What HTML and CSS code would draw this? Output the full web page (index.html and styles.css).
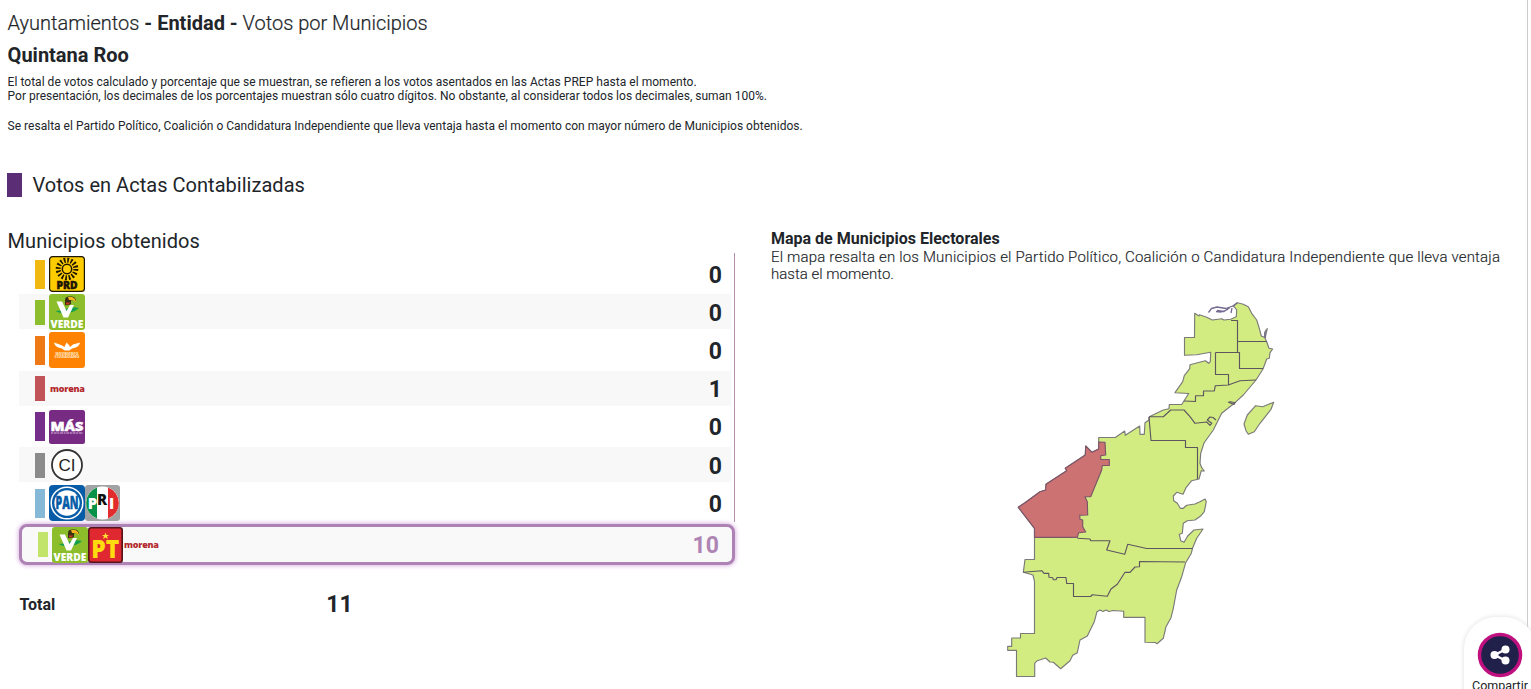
FILE: index.html
```html
<!DOCTYPE html>
<html lang="es">
<head>
<meta charset="utf-8">
<title>Votos por Municipios</title>
<link rel="stylesheet" href="styles.css">
</head>
<body>
<div class="page">
  <main class="content">
    <h1 class="title">Ayuntamientos <b>- Entidad -</b> Votos por Municipios</h1>
    <h2 class="state">Quintana Roo</h2>
    <p class="notes"><span class="first-note">El total de votos calculado y porcentaje que se muestran, se refieren a los votos asentados en las Actas PREP hasta el momento.</span><br>Por presentación, los decimales de los porcentajes muestran sólo cuatro dígitos. No obstante, al considerar todos los decimales, suman 100%.</p>
    <p class="notes lead">Se resalta el Partido Político, Coalición o Candidatura Independiente que lleva ventaja hasta el momento con mayor número de Municipios obtenidos.</p>
    <h3 class="section"><i class="marker"></i><span>Votos en Actas Contabilizadas</span></h3>
    <div class="columns">
      <section class="results">
        <h4 class="subtitle">Municipios obtenidos</h4>
        <div class="rows">
          <div class="row"><i class="bar prd"></i>
            <svg class="logo" viewBox="0 0 36 36"><rect x=".6" y=".6" width="34.800" height="34.800" rx="3" fill="#fc0" stroke="#1c1500" stroke-width="1.200"/><circle cx="18" cy="13" r="4.700" fill="none" stroke="#1c1500" stroke-width="1.500"/><circle cx="18" cy="13" r="8.800" fill="none" stroke="#1c1500" stroke-width="5" stroke-dasharray="1.700 1.756"/><text x="18" y="33" text-anchor="middle" textLength="21" lengthAdjust="spacingAndGlyphs" class="logo-text" font-size="10.500" fill="#1c1500" stroke="#1c1500" stroke-width=".5">PRD</text></svg>
            <b class="num">0</b></div>
          <div class="row alt"><i class="bar short pvem"></i>
            <svg class="logo" viewBox="0 0 36 36"><rect width="36" height="36" rx="3" fill="#8cbd2b"/><path d="M6.500 17Q12 17 16 15Q23 12 30 14Q26 18 19 19Q11 20 6.500 17Z" fill="#14a04a"/><path d="M7.500 7.500H13L17.500 17L21 11H25L19 23.500H14.500Z" fill="#fff"/><path d="M16 11V6Q16 2.500 20 2.500H23Q27 3 27 7.500Q24.500 5.500 22 6.500V10Q19 12 16 11Z" fill="#3b3014"/><path d="M19 3H23Q26.500 4 27 8Q24 5.500 20 6Z" fill="#f4b61c"/><path d="M17 8.500H21L20 10.500H17Z" fill="#c63b21"/><text x="18" y="33.800" text-anchor="middle" textLength="33" lengthAdjust="spacingAndGlyphs" class="logo-text" font-size="11" fill="#fff">VERDE</text></svg>
            <b class="num">0</b></div>
          <div class="row"><i class="bar mc"></i>
            <svg class="logo" viewBox="0 0 36 36"><rect width="36" height="36" rx="3" fill="#ff8300"/><path d="M5 10.500L12 13L15.500 15L17.500 10.500L20 13L21 15L24 12.500L31 10.500Q30 15.500 23 16.500L20.500 18.500H15.500L13 16.500Q6 15.500 5 10.500Z" fill="#fff"/><text x="18" y="22.500" text-anchor="middle" textLength="23" lengthAdjust="spacingAndGlyphs" class="logo-text" font-size="3" fill="#ffe0bd">MOVIMIENTO</text><text x="18" y="26" text-anchor="middle" textLength="25" lengthAdjust="spacingAndGlyphs" class="logo-text" font-size="4" fill="#ffe0bd">CIUDADANO</text></svg>
            <b class="num">0</b></div>
          <div class="row alt"><i class="bar short mor"></i><span class="morena">morena</span><b class="num">1</b></div>
          <div class="row"><i class="bar mas"></i>
            <svg class="logo" viewBox="0 0 36 36"><rect y="1" width="36" height="34" rx="2.500" fill="#782b83"/><text x="18" y="21.500" text-anchor="middle" textLength="33" lengthAdjust="spacingAndGlyphs" class="logo-text" font-size="13" fill="#fff" stroke="#fff" stroke-width=".5">MÁS</text><path d="M2 24H34" stroke="#d9b8dc" stroke-width="1.200" stroke-dasharray="2 .7 3 .6"/></svg>
            <b class="num">0</b></div>
          <div class="row alt"><i class="bar short ind"></i>
            <svg class="logo" viewBox="0 0 36 36"><circle cx="18" cy="18" r="15" fill="#fff" stroke="#333" stroke-width="1.800"/><text x="18" y="24" text-anchor="middle" class="ci" font-size="17" fill="#222">CI</text></svg>
            <b class="num">0</b></div>
          <div class="row"><i class="bar pan"></i>
            <svg class="logo" viewBox="0 0 36 36"><rect width="36" height="36" rx="4" fill="#075ca8"/><circle cx="18" cy="18" r="15.800" fill="none" stroke="#fff" stroke-width="1.500"/><circle cx="18" cy="18" r="12.700" fill="#fff"/><text x="18" y="24" text-anchor="middle" textLength="23" lengthAdjust="spacingAndGlyphs" class="logo-text" font-size="17" fill="#075ca8" stroke="#075ca8" stroke-width=".4">PAN</text></svg>
            <svg class="logo narrow" viewBox="0 0 35 36"><rect width="35" height="36" rx="3" fill="#a1a2a4"/><circle cx="17.500" cy="18" r="16.500" fill="#fff"/><path d="M12 2.500A16.500 16.500 0 0 0 12 33.500Z" fill="#079247"/><path d="M23 2.500A16.500 16.500 0 0 1 23 33.500Z" fill="#e22b2e"/><text x="7.500" y="24" text-anchor="middle" class="logo-text" font-size="15" fill="#fff">P</text><text x="17" y="19.500" text-anchor="middle" class="logo-text" font-size="15" fill="#111">R</text><text x="26.500" y="24" text-anchor="middle" class="logo-text" font-size="15" fill="#fff">I</text></svg>
            <b class="num">0</b></div>
        </div>
        <div class="winner"><i class="bar short coal"></i>
          <svg class="logo" viewBox="0 0 36 36"><rect width="36" height="36" rx="3" fill="#8cbd2b"/><path d="M6.500 17Q12 17 16 15Q23 12 30 14Q26 18 19 19Q11 20 6.500 17Z" fill="#14a04a"/><path d="M7.500 7.500H13L17.500 17L21 11H25L19 23.500H14.500Z" fill="#fff"/><path d="M16 11V6Q16 2.500 20 2.500H23Q27 3 27 7.500Q24.500 5.500 22 6.500V10Q19 12 16 11Z" fill="#3b3014"/><path d="M19 3H23Q26.500 4 27 8Q24 5.500 20 6Z" fill="#f4b61c"/><path d="M17 8.500H21L20 10.500H17Z" fill="#c63b21"/><text x="18" y="33.800" text-anchor="middle" textLength="33" lengthAdjust="spacingAndGlyphs" class="logo-text" font-size="11" fill="#fff">VERDE</text></svg>
          <svg class="logo narrow" viewBox="0 0 35 36"><rect x=".8" y=".8" width="33.400" height="34.400" rx="2.500" fill="#e02830" stroke="#54151a" stroke-width="1.600"/><path d="M17.500 5.500L18.500 8H21L19 9.500L20 12L17.500 10.500L15 12L16 9.500L14 8H16.500Z" fill="#fd3"/><text x="17.300" y="30.500" text-anchor="middle" textLength="28" lengthAdjust="spacingAndGlyphs" class="logo-text" font-size="24" fill="#ffdc0f">PT</text></svg>
          <span class="morena">morena</span><b class="num">10</b></div>
        <div class="total"><b>Total</b><b class="sum">11</b></div>
      </section>
      <section class="map-panel">
        <h4 class="map-title">Mapa de Municipios Electorales</h4>
        <p class="map-text"><span class="first">El mapa resalta en los Municipios el Partido Político, Coalición o Candidatura Independiente que lleva ventaja</span><br>hasta el momento.</p>
        <svg class="map" viewBox="1000 295 280 390" width="280" height="390" stroke="#5e565f" stroke-width="1.150" stroke-linejoin="round">
          <path fill="#d2ec82" stroke="#7b7a78" d="M1194.700 313.300L1199 316 1199.500 314.800 1206.700 317.300 1212.300 320 1221.700 318.700 1224 320 1230.700 319.300 1236.300 316.700 1236.700 310 1234.700 307.300 1233 306 1237.300 302.700 1243.300 304.300 1248.300 306.700 1251.700 313.300 1256.700 320 1259.300 328.300 1261.300 336 1264.300 337.300 1265 331.700 1267.300 328.700 1265 338.300 1266.700 341.700 1269 348.300 1272.700 349 1270 352.700 1269.300 358.300 1266.700 359 1263 369 1256 380 1243.300 395 1235 402.700 1221.700 413.300 1213.300 430 1204 443 1200.700 453.300 1200 463.300 1201.700 467.700 1204.300 471 1201.300 470.700 1199 479 1191.700 480.700 1186 487.700 1183 494.300 1176.700 492.300 1173.300 496 1173.700 500.700 1177.300 503.300 1180.300 508.300 1183.300 508.300 1186.700 505.300 1195 504 1200 501.700 1205 499 1206.300 501.700 1204.300 511.700 1201 515.700 1195 520 1187.300 520.700 1183.300 523.300 1182.300 533.300 1179.300 534.300 1180.700 540.700 1184 542.300 1187.700 536 1194 530 1203 529 1196.700 538.300 1192.700 547.700 1191.300 553.300 1185.700 562.700 1181.700 576.700 1176.700 590 1173.300 608.300 1171 617.700 1166 626.700 1163.300 638.300 1159 642 1157.300 643.700 1155 642.500 1145 642.300V617.300H1123.700V611.300L1113 610.500 1109 611.500 1106 610 1103 611.500 1100 610 1097 611.700 1094.300 621.700 1087.300 636 1080 640 1077.300 652.700 1072.700 655.300 1070 660.700 1060.700 668.700 1053.300 662.300 1050 662 1045.700 658 1037.300 660.700 1034.700 663.300V676.500H1016.500V650.300H1007.700V646.300H1011.700V638H1020.500V633.500H1034.500V581.700L1033 575 1023.300 572.300 1025 559.500H1034.500V528.300L1018.300 507.300 1025 502.700 1040 491.700 1045.700 490 1046 484.300 1066.700 470.700 1065.300 468.300 1085.300 455 1085.700 446 1092 452.300 1098.700 449V437.500H1115.300L1124.700 431 1125.300 435.300 1139.700 426 1140 434.300H1144.300L1145 422.700 1149 420 1149.300 416.700 1163.300 410 1169 408.700 1169.300 404.500H1181.700L1188.700 393.500 1175 392.700 1182.700 381.700 1184.300 375.700 1189.700 368.700 1190 364.700 1205.300 360.700 1208.700 363.300 1210.300 361.700 1210.700 352.300 1196.700 354.800 1184.500 355.300V337.500H1194.500Z"/>
          <path fill="#cc7272" stroke="#7b5568" d="M1034.500 537.300V528.300L1018.300 507.300 1025 502.700 1040 491.700 1045.700 490 1046 484.300 1066.700 470.700 1065.300 468.300 1085.300 455 1085.700 446 1092 452.300 1098.700 449V442L1105 442.300 1105.700 455 1100.700 455.700V459.500H1109.300V465.500H1102.300L1101.700 470 1090.700 496.700H1085L1087.300 501.700 1087.700 515 1079.700 515.300 1080 519.300 1082.700 520V526.700L1085.700 532 1078.700 532.700 1077.300 537.300Z"/>
          <path fill="#d2ec82" stroke="#7b7a78" d="M1273.700 402.300L1271 409.300 1260 423.300 1254.300 431.700 1248.300 434.300 1246 430.700 1244 424 1247.300 415 1255.700 405.700 1262.700 406.700Z"/>
          <path fill="none" stroke="#756a91" stroke-width="1.300" d="M1208.500 312.500L1211.500 308.500 1217 307 1226 308.500 1234 305.500 1237.300 302.700M1216 311.500L1221 312 1228 309.500M1217 310.500L1224 311.500 1230 307.500M1232 308L1231 313M1265 332L1265.500 338"/>
          <path fill="none" d="M1231 320.500H1237.500V352.500M1237.700 341.500H1266.700M1215.500 352.500H1239.500V368.500H1263M1215.500 352.500V374.500H1228.500V384.700M1256 380L1240 380.700 1228.300 385 1215.300 385.700 1214.300 391H1203.500V395.700H1195.500V401.500L1184 401M1228 402L1234 404.500 1235 402.700 1229.500 401.500M1149 416.700H1163.300L1170.700 410H1184L1190 416.700 1195 423.300 1206.700 422 1210 425.300 1211.700 423.300 1207.300 420 1210 417 1213 417.500 1216 420M1149 417L1151 440.500H1185.500V447.500H1197.500V479M1077.300 538.300L1090 539 1090.700 540.700H1110L1106.700 550 1124.700 554.300 1127.700 544.300 1146.700 548.500H1192.700M1023.300 572.300L1041.700 570.700 1044 573.300H1048.700L1049 577.300 1052.700 577.700 1053.300 579.700H1056L1057 577.500H1066L1066.700 583.500H1073.500V596.500H1090.700L1092.300 594.700 1107.300 596.300 1111 589 1117.300 584.300 1125 572.300H1130L1135 567 1139.500 566.700V561.500L1185 562"/>
        </svg>
      </section>
    </div>
  </main>
  <aside class="share">
    <svg class="share-icon" viewBox="0 0 46 46"><circle cx="23" cy="23" r="20.500" fill="#20204a" stroke="#c0107f" stroke-width="3.500"/><path d="M28.500 17.500L17.500 23L28.500 28.500" fill="none" stroke="#fff" stroke-width="2.500"/><g fill="#fff"><circle cx="17.500" cy="23" r="4"/><circle cx="28.500" cy="17.500" r="4"/><circle cx="28.500" cy="28.500" r="4"/></g></svg>
    <span class="share-label">Compartir</span>
  </aside>
</div>
</body>
</html>
```
FILE: styles.css
```css
* { box-sizing: border-box; }
body { margin: 0; overflow: hidden; background: #fff; color: #212529; font-family: Roboto, "Liberation Sans", sans-serif; }
h1, h2, h3, h4, p { margin: 0; }
.page { position: relative; width: 1531px; height: 689px; overflow: hidden; }
.content { width: 1528px; height: 628px; padding: 11px 0 0 7px; border-right: 1px solid #ccc; }
.title { height: 24px; padding-left: .6px; font-size: 20px; line-height: 24px; font-weight: 300; white-space: nowrap; -webkit-text-stroke: .2px; }
.title b { font-weight: 700; -webkit-text-stroke: 0; }
.state { height: 24px; margin-top: 8px; padding-left: .6px; font-size: 20px; line-height: 24px; font-weight: 700; }
.notes { margin-top: 8px; padding-left: .6px; font-size: 12px; line-height: 14px; white-space: nowrap; }
.first-note { letter-spacing: .035px; }
.lead { margin-top: 16px; letter-spacing: .016px; }
.section { display: flex; align-items: center; gap: 10.5px; height: 24px; margin-top: 40px; font-size: 20px; font-weight: 400; letter-spacing: .03px; }
.marker { width: 15px; height: 24px; background: #5b2d75; }
.columns { display: flex; margin-top: 32px; }
.results { width: 728px; height: 400px; }
.subtitle { height: 24px; padding-left: .6px; font-size: 20px; line-height: 24px; font-weight: 400; letter-spacing: .05px; }
.rows { width: 716px; margin-left: 12px; padding-top: 2px; border-right: 1px solid #b58eb4; }
.row { display: flex; align-items: center; height: 38.2px; padding: 0 9px 0 16px; border-right: 3px solid #fff; background: #fff; }
.row.alt { background: linear-gradient(#fff 1px, #f8f8f8 1px, #f8f8f8 36px, #fff 36px); }
.bar { width: 10px; height: 29px; margin-right: 4px; flex: none; }
.bar.short { height: 25px; }
.prd { background: #f0b810; }
.pvem { background: #8dbe2d; }
.mc { background: #ef7915; }
.mor { background: #c15458; }
.mas { background: #752f8b; }
.ind { background: #8b8b8b; }
.pan { background: #86b8d8; }
.coal { background: #c3e46b; }
.logo { width: 36px; height: 36px; flex: none; }
.logo.narrow { width: 35px; }
.logo-text { font-family: "Open Sans", sans-serif; font-weight: 800; }
.ci { font-family: "Liberation Sans", sans-serif; }
.morena { padding-left: 1px; color: #b3282d; font: 800 9px "Open Sans", sans-serif; letter-spacing: -.25px; }
.num { margin-left: auto; padding-top: 2px; font-size: 23px; line-height: 37px; font-weight: 700; }
.winner { display: flex; align-items: center; width: 716px; height: 41px; margin: 2px 0 0 12px; padding: 0 13px 0 16px; border: 3px solid #ae82b5; border-radius: 8px; background: #f9f9f9; box-shadow: 0 0 4px 1px #dcb8e3; }
.winner .num { color: #ae84b4; }
.total { display: flex; align-items: center; height: 24px; margin: 27px 0 0 12.5px; font-size: 16px; }
.sum { margin-left: 271px; font-size: 23px; }
.map-panel { padding-left: 36px; }
.map-title { height: 20px; font-size: 16px; line-height: 20px; font-weight: 700; }
.map-text { font-size: 15px; line-height: 17px; font-weight: 300; white-space: nowrap; -webkit-text-stroke: .15px; }
.map-text .first { letter-spacing: .178px; }
.map { display: block; margin: 12px 0 0 229px; }
.share { position: absolute; left: 1464px; top: 617px; width: 72px; height: 90px; padding: 15px 0 0 8px; border-radius: 32px 32px 0 0; background: #fff; box-shadow: 0 0 5px #ddd; }
.share-icon { display: block; width: 46px; height: 46px; margin-left: 4.5px; }
.share-label { display: block; font-size: 12.5px; line-height: 15px; }
```
